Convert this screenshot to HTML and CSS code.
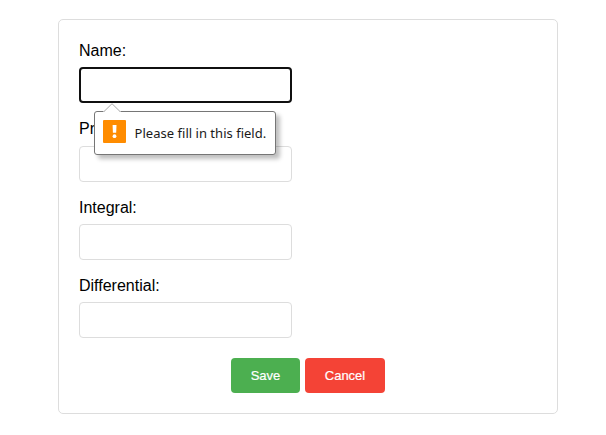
FILE: index.html
```html
<!DOCTYPE html>
<html lang="en">
<head>
<meta charset="utf-8">
<title>Form</title>
<link rel="stylesheet" href="styles.css">
</head>
<body>
<form class="card" novalidate>
  <div class="field">
    <label for="name">Name:</label>
    <input class="invalid" id="name" type="text">
    <div class="tooltip" role="alert">
      <svg class="arrow" width="18" height="10" viewBox="0 0 18 10"><path d="M0 10V8.5H1L9 .7L17 8.5H18V10Z" fill="#fff"/><path d="M1 8.5L9 .7L17 8.5" fill="none" stroke="#aaa"/></svg>
      <svg class="warning" width="23" height="23" viewBox="0 0 23 23"><rect width="23" height="23" rx="1" fill="#ff8c00"/><path d="M9.6 5h3.9l-.3 7.8H9.9z" fill="#fff"/><circle cx="11.5" cy="16.2" r="1.9" fill="#fff"/></svg>
      <span class="message">Please fill in this field.</span>
    </div>
  </div>
  <div class="field">
    <label for="second">Pr</label>
    <input id="second" type="text">
  </div>
  <div class="field">
    <label for="integral">Integral:</label>
    <input id="integral" type="text">
  </div>
  <div class="field">
    <label for="differential">Differential:</label>
    <input id="differential" type="text">
  </div>
  <div class="actions">
    <button class="save" type="button">Save</button>
    <button class="cancel" type="button">Cancel</button>
  </div>
</form>
</body>
</html>
```
FILE: styles.css
```css
* { box-sizing: border-box; }
body {
  margin: 0;
  background: #fff;
  color: #000;
  font-family: "Liberation Sans", Arial, sans-serif;
}
.card {
  width: 500px;
  height: 395px;
  margin: 19px 0 0 58px;
  padding: 20px;
  border: 1px solid #ddd;
  border-radius: 5px;
}
.field {
  position: relative;
  height: 78.33px;
  padding-top: 2px;
}
label {
  display: block;
  margin-bottom: 7.3px;
  font-size: 16px;
  line-height: 18px;
}
input {
  display: block;
  width: 213px;
  height: 36px;
  padding: 8px;
  border: 1px solid #ddd;
  border-radius: 4px;
  outline: none;
}
.invalid { border: 2px solid #101010; }
.tooltip {
  position: absolute;
  z-index: 1;
  top: 71px;
  left: 15px;
  display: flex;
  align-items: center;
  width: 182px;
  height: 44px;
  padding: 0 8px;
  border: 1px solid #767676;
  border-radius: 3px;
  background: #fff;
  box-shadow: 4px 4px 4px rgba(0, 0, 0, .25);
}
.arrow {
  position: absolute;
  top: -9px;
  left: 8px;
}
.warning { margin-top: -3px; flex: none; }
.message {
  margin-left: 8.6px;
  color: #1a1a1a;
  font: 13px/18px "Noto Sans", sans-serif;
  letter-spacing: .02px;
  white-space: nowrap;
}
.actions {
  display: flex;
  justify-content: center;
  gap: 5px;
  margin-top: 4.68px;
}
button {
  width: 69px;
  height: 35px;
  padding: 0;
  border: 0;
  border-radius: 4px;
  color: #fff;
  font: 13px "Liberation Sans", Arial, sans-serif;
  -webkit-text-stroke: .2px #fff;
}
.save { background: #4caf50; }
.cancel { width: 80px; background: #f44336; }
```
